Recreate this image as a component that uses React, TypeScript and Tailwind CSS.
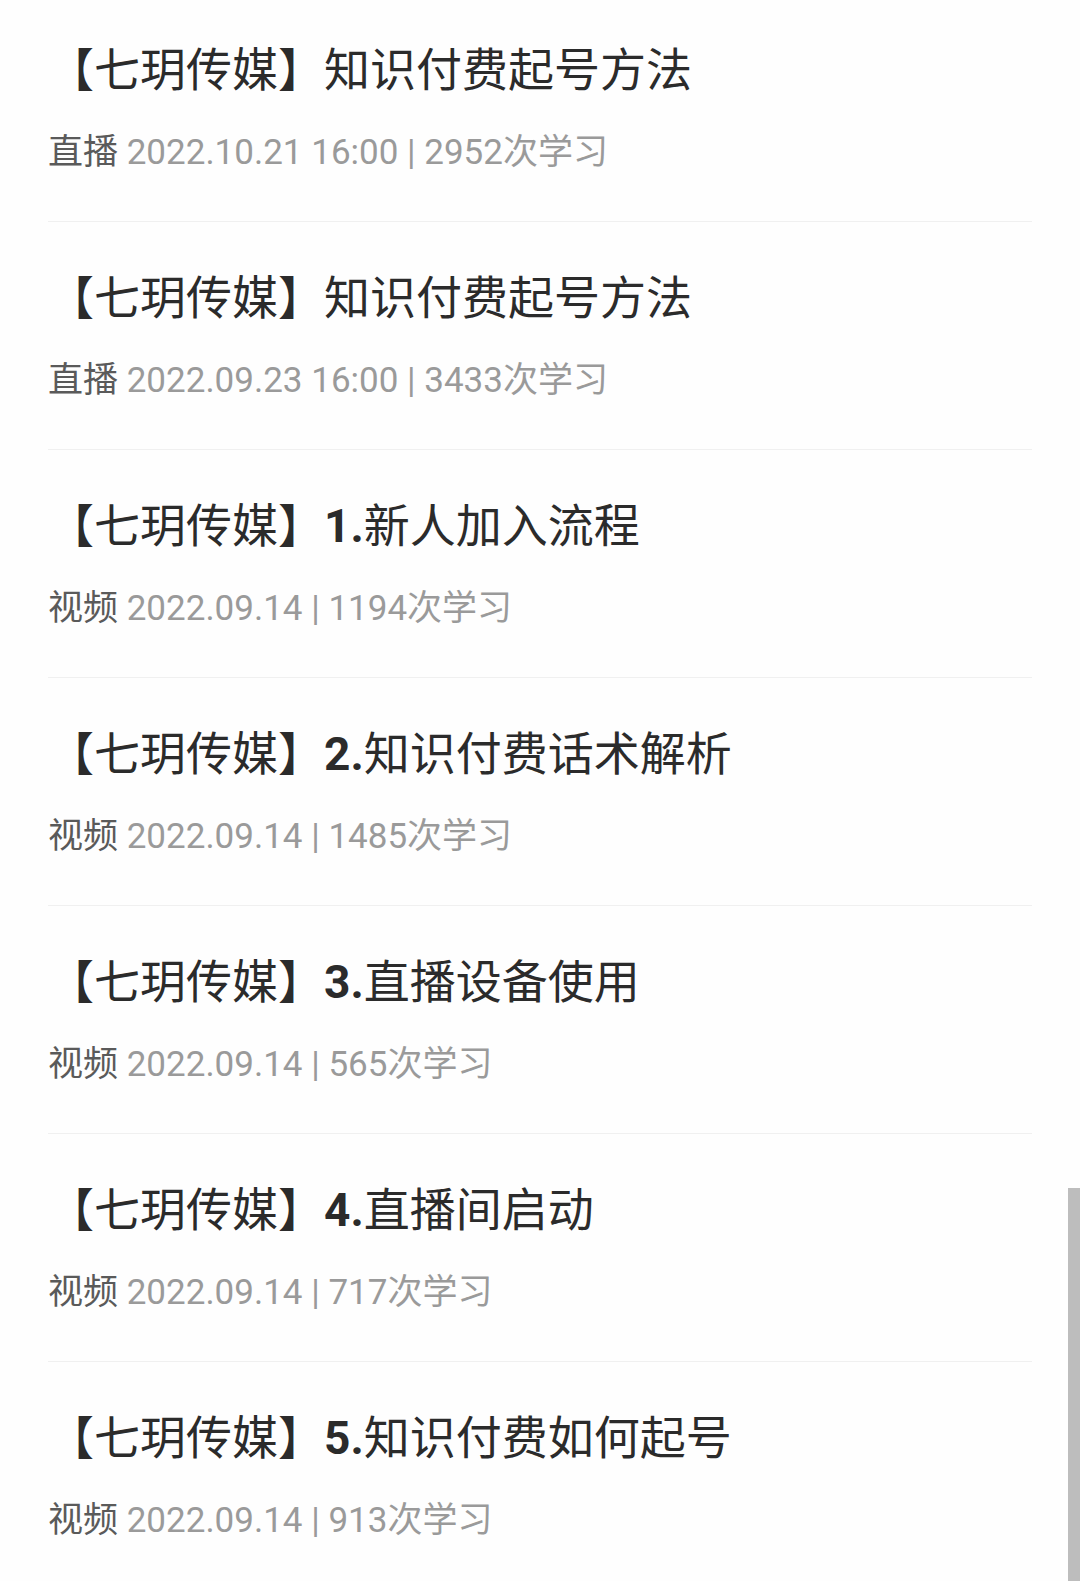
const items = [
  { num: "", title: "知识付费起号方法", kind: "直播", meta: "2022.10.21 16:00 | 2952次学习" },
  { num: "", title: "知识付费起号方法", kind: "直播", meta: "2022.09.23 16:00 | 3433次学习" },
  { num: "1.", title: "新人加入流程", kind: "视频", meta: "2022.09.14 | 1194次学习" },
  { num: "2.", title: "知识付费话术解析", kind: "视频", meta: "2022.09.14 | 1485次学习" },
  { num: "3.", title: "直播设备使用", kind: "视频", meta: "2022.09.14 | 565次学习" },
  { num: "4.", title: "直播间启动", kind: "视频", meta: "2022.09.14 | 717次学习" },
  { num: "5.", title: "知识付费如何起号", kind: "视频", meta: "2022.09.14 | 913次学习" },
];

export default function App() {
  return (
    <div
      className="relative w-[1080px] h-[1581px] overflow-hidden bg-[#fefefe]"
      style={{ fontFamily: 'Roboto, "Noto Sans CJK SC", sans-serif' }}
    >
      <ul className="pl-[48px] pr-[48px]">
        {items.map((it, i) => (
          <li
            key={i}
            className="flex flex-col gap-[33px] pt-[48px] pb-[46px] border-b-[1.5px] border-[#f0f0f0] first:pt-[42px]"
          >
            <div className="h-[56px] leading-[56px] text-[46px] text-[#2b2b2b] whitespace-nowrap">
              【七玥传媒】
              {it.num && <span className="font-bold">{it.num}</span>}
              {it.title}
            </div>
            <div className="h-[44px] leading-[44px] text-[35px] text-[#9a9a9a] whitespace-nowrap">
              <span className="text-[#5a5a5a]">{it.kind}</span> {it.meta}
            </div>
          </li>
        ))}
      </ul>
      <div className="absolute right-0 top-[1188px] w-[12px] h-[393px] bg-[#bdbdbd]" />
    </div>
  );
}
